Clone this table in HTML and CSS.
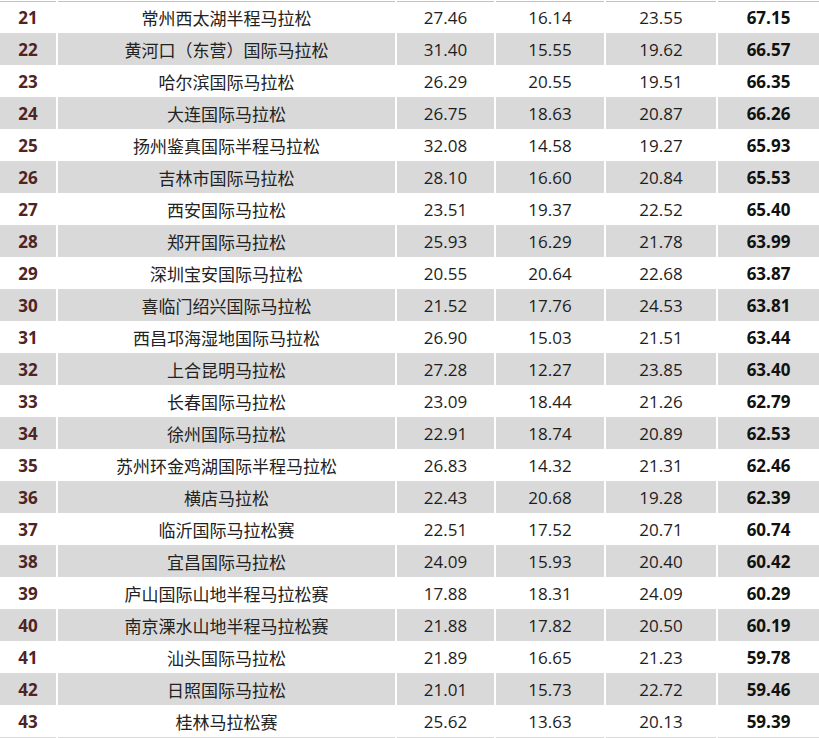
FILE: index.html
```html
<!DOCTYPE html>
<html lang="zh-CN">
<head>
<meta charset="utf-8">
<title>马拉松评分</title>
<link rel="stylesheet" href="styles.css">
</head>
<body>
<div class="table">
  <div class="row first"><div class="c rank">21</div><div class="c name">常州西太湖半程马拉松</div><div class="c">27.46</div><div class="c">16.14</div><div class="c">23.55</div><div class="c total">67.15</div></div>
  <div class="row alt"><div class="c rank">22</div><div class="c name">黄河口（东营）国际马拉松</div><div class="c">31.40</div><div class="c">15.55</div><div class="c">19.62</div><div class="c total">66.57</div></div>
  <div class="row"><div class="c rank">23</div><div class="c name">哈尔滨国际马拉松</div><div class="c">26.29</div><div class="c">20.55</div><div class="c">19.51</div><div class="c total">66.35</div></div>
  <div class="row alt"><div class="c rank">24</div><div class="c name">大连国际马拉松</div><div class="c">26.75</div><div class="c">18.63</div><div class="c">20.87</div><div class="c total">66.26</div></div>
  <div class="row"><div class="c rank">25</div><div class="c name">扬州鉴真国际半程马拉松</div><div class="c">32.08</div><div class="c">14.58</div><div class="c">19.27</div><div class="c total">65.93</div></div>
  <div class="row alt"><div class="c rank">26</div><div class="c name">吉林市国际马拉松</div><div class="c">28.10</div><div class="c">16.60</div><div class="c">20.84</div><div class="c total">65.53</div></div>
  <div class="row"><div class="c rank">27</div><div class="c name">西安国际马拉松</div><div class="c">23.51</div><div class="c">19.37</div><div class="c">22.52</div><div class="c total">65.40</div></div>
  <div class="row alt"><div class="c rank">28</div><div class="c name">郑开国际马拉松</div><div class="c">25.93</div><div class="c">16.29</div><div class="c">21.78</div><div class="c total">63.99</div></div>
  <div class="row"><div class="c rank">29</div><div class="c name">深圳宝安国际马拉松</div><div class="c">20.55</div><div class="c">20.64</div><div class="c">22.68</div><div class="c total">63.87</div></div>
  <div class="row alt"><div class="c rank">30</div><div class="c name">喜临门绍兴国际马拉松</div><div class="c">21.52</div><div class="c">17.76</div><div class="c">24.53</div><div class="c total">63.81</div></div>
  <div class="row"><div class="c rank">31</div><div class="c name">西昌邛海湿地国际马拉松</div><div class="c">26.90</div><div class="c">15.03</div><div class="c">21.51</div><div class="c total">63.44</div></div>
  <div class="row alt"><div class="c rank">32</div><div class="c name">上合昆明马拉松</div><div class="c">27.28</div><div class="c">12.27</div><div class="c">23.85</div><div class="c total">63.40</div></div>
  <div class="row"><div class="c rank">33</div><div class="c name">长春国际马拉松</div><div class="c">23.09</div><div class="c">18.44</div><div class="c">21.26</div><div class="c total">62.79</div></div>
  <div class="row alt"><div class="c rank">34</div><div class="c name">徐州国际马拉松</div><div class="c">22.91</div><div class="c">18.74</div><div class="c">20.89</div><div class="c total">62.53</div></div>
  <div class="row"><div class="c rank">35</div><div class="c name">苏州环金鸡湖国际半程马拉松</div><div class="c">26.83</div><div class="c">14.32</div><div class="c">21.31</div><div class="c total">62.46</div></div>
  <div class="row alt"><div class="c rank">36</div><div class="c name">横店马拉松</div><div class="c">22.43</div><div class="c">20.68</div><div class="c">19.28</div><div class="c total">62.39</div></div>
  <div class="row"><div class="c rank">37</div><div class="c name">临沂国际马拉松赛</div><div class="c">22.51</div><div class="c">17.52</div><div class="c">20.71</div><div class="c total">60.74</div></div>
  <div class="row alt"><div class="c rank">38</div><div class="c name">宜昌国际马拉松</div><div class="c">24.09</div><div class="c">15.93</div><div class="c">20.40</div><div class="c total">60.42</div></div>
  <div class="row"><div class="c rank">39</div><div class="c name">庐山国际山地半程马拉松赛</div><div class="c">17.88</div><div class="c">18.31</div><div class="c">24.09</div><div class="c total">60.29</div></div>
  <div class="row alt"><div class="c rank">40</div><div class="c name">南京溧水山地半程马拉松赛</div><div class="c">21.88</div><div class="c">17.82</div><div class="c">20.50</div><div class="c total">60.19</div></div>
  <div class="row"><div class="c rank">41</div><div class="c name">汕头国际马拉松</div><div class="c">21.89</div><div class="c">16.65</div><div class="c">21.23</div><div class="c total">59.78</div></div>
  <div class="row alt"><div class="c rank">42</div><div class="c name">日照国际马拉松</div><div class="c">21.01</div><div class="c">15.73</div><div class="c">22.72</div><div class="c total">59.46</div></div>
  <div class="row"><div class="c rank">43</div><div class="c name">桂林马拉松赛</div><div class="c">25.62</div><div class="c">13.63</div><div class="c">20.13</div><div class="c total">59.39</div></div>
  <div class="row alt"><div class="c rank"></div><div class="c name"></div><div class="c"></div><div class="c"></div><div class="c"></div><div class="c total"></div></div>
</div>
</body>
</html>
```

FILE: styles.css
```css
html, body {
  margin: 0;
  padding: 0;
  background: #ffffff;
  overflow: hidden;
}

body {
  width: 819px;
  height: 738px;
  font-family: "Open Sans", "Noto Sans", "Noto Sans CJK SC", sans-serif;
  font-size: 17px;
  color: #1e1e1e;
}

.table {
  padding-top: 1px;
}

.row {
  display: grid;
  grid-template-columns: 56px 337px 97px 108px 110px 1fr;
  column-gap: 2px;
  height: 32px;
}

.c {
  display: flex;
  align-items: center;
  justify-content: center;
  line-height: 1;
  white-space: nowrap;
}

.row.alt .c {
  background: #d9d9d9;
}

.row.first .c {
  box-shadow: inset 0 1px 0 #c2c2c2;
}

.rank {
  font-weight: 700;
  color: #4e2424;
}

.name {
  font-family: "Noto Sans CJK SC", "Noto Sans", sans-serif;
  font-size: 17px;
  color: #222222;
}

.total {
  font-weight: 700;
  color: #111111;
}
```
